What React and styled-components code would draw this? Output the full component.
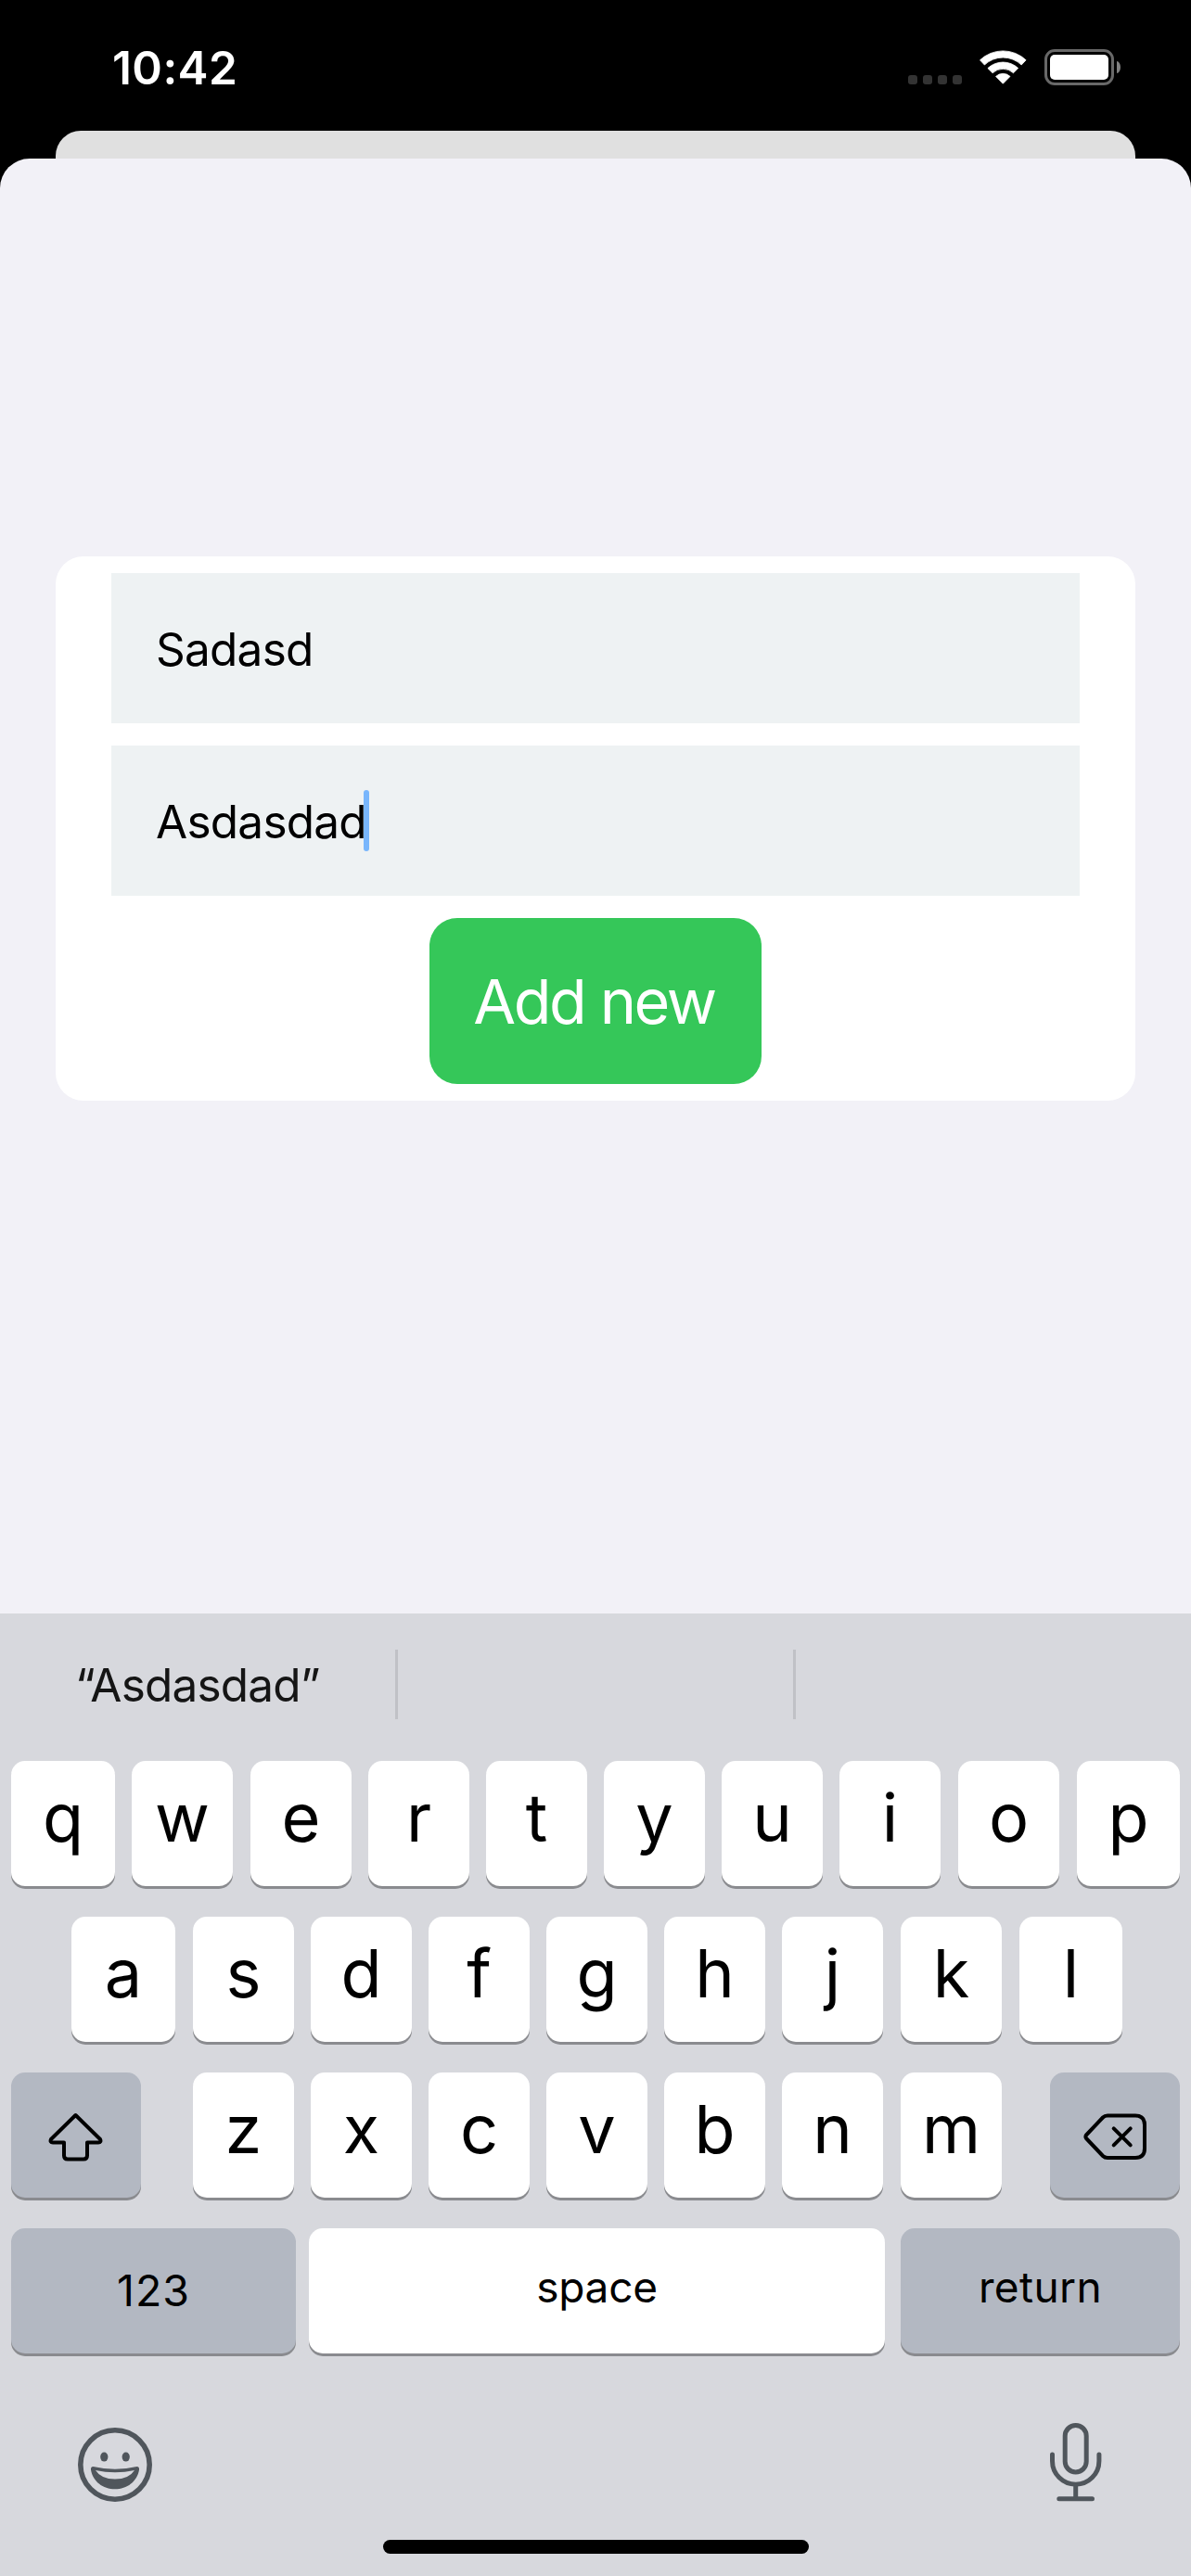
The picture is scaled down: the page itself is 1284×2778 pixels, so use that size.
import React from "react";
import styled, { createGlobalStyle } from "styled-components";

const GlobalStyle = createGlobalStyle`
  * { box-sizing: border-box; }
  body { margin: 0; background: #000; }
`;

const Screen = styled.div`
  display: flex;
  flex-direction: column;
  width: 1284px;
  height: 2778px;
  overflow: hidden;
  background: #000;
  color: #000;
  font-family: Inter, "Liberation Sans", sans-serif;
`;

const StatusBar = styled.header`
  display: flex;
  justify-content: space-between;
  align-items: flex-start;
  flex: none;
  height: 141px;
  padding: 53px 76px 0 121px;
  color: #fff;
`;

const Clock = styled.time`
  font-size: 49.5px;
  font-weight: 600;
  line-height: 40px;
  letter-spacing: 0.4px;
`;

const Indicators = styled.div`
  display: flex;
  align-items: flex-end;
  gap: 19px;
  height: 39px;
`;

const SignalDots = styled.div`
  display: flex;
  gap: 6px;
  padding-bottom: 1px;
`;

const SignalDot = styled.span`
  width: 10px;
  height: 10px;
  border-radius: 3px;
  background: #333;
`;

const WifiIcon = styled.svg`
  display: block;
  width: 51px;
  height: 37px;
  margin-bottom: 1px;
`;

const Battery = styled.div`
  display: flex;
  align-items: center;
  gap: 3px;
`;

const BatteryShell = styled.div`
  width: 75px;
  height: 39px;
  padding: 3px;
  border: 3px solid #686868;
  border-radius: 11px;
`;

const BatteryLevel = styled.div`
  height: 100%;
  border-radius: 5px;
  background: #fff;
`;

const BatteryTip = styled.span`
  width: 4px;
  height: 13px;
  border-radius: 0 4px 4px 0 / 0 6.5px 6.5px 0;
  background: #808080;
`;

const BackSheet = styled.div`
  flex: none;
  height: 30px;
  margin: 0 60px;
  border-radius: 27px 27px 0 0;
  background: #e0e0e0;
`;

const Sheet = styled.main`
  flex: 1;
  padding: 429px 60px 0;
  border-radius: 32px 32px 0 0;
  background: #f2f1f7;
`;

const FormCard = styled.section`
  display: flex;
  flex-direction: column;
  align-items: center;
  gap: 24px;
  padding: 18px 60px;
  border-radius: 30px;
  background: #fff;
`;

const Field = styled.div`
  display: flex;
  align-items: center;
  width: 100%;
  height: 162px;
  padding: 0 48px;
  background: #eef2f3;
  font-size: 49.5px;
  letter-spacing: -0.75px;
  line-height: 60px;
`;

const FieldText = styled.span`
  padding-top: 2px;
`;

const Caret = styled.span`
  width: 6px;
  height: 66px;
  margin-left: -3px;
  border-radius: 3px;
  background: #78b6fc;
`;

const AddButton = styled.button`
  width: 358px;
  height: 179px;
  padding: 0 3px 0 0;
  border: 0;
  border-radius: 30px;
  background: #35c759;
  color: #fff;
  font: 400 66.5px/80px Inter, "Liberation Sans", sans-serif;
  letter-spacing: -2.4px;
`;

const Keyboard = styled.section`
  display: flex;
  flex-direction: column;
  flex: none;
  height: 1038px;
  background: #d7d8dd;
`;

const Suggestions = styled.div`
  display: flex;
  align-items: center;
  height: 153px;
`;

const Suggestion = styled.div`
  flex: 1;
  color: #151515;
  font-size: 49.5px;
  line-height: 60px;
  letter-spacing: -0.8px;
  text-align: center;
`;

const Divider = styled.span`
  width: 3px;
  height: 75px;
  background: #c0c1c6;
`;

const KeyRows = styled.div`
  display: flex;
  flex-direction: column;
  gap: 33px;
  padding: 6px 12px 0;
`;

const KeyRow = styled.div`
  display: flex;
`;

const Key = styled.button`
  display: flex;
  align-items: center;
  justify-content: center;
  flex: none;
  width: ${(p) => p.$width || 109}px;
  height: 135px;
  margin-left: ${(p) => p.$before ?? 18}px;
  padding: 0 0 ${(p) => p.$lift || 0}px;
  border: 0;
  border-radius: 15px;
  background: ${(p) => (p.$dark ? "#b3b8c2" : "#fff")};
  box-shadow: 0 3px 0 #8a8b8f;
  color: #000;
  font: 400 ${(p) => p.$size || 72}px/88px Inter, "Liberation Sans", sans-serif;
  letter-spacing: ${(p) => p.$spacing || 0}px;
`;

const KeyIcon = styled.svg`
  display: block;
  fill: none;
  stroke: #000;
  stroke-width: 4;
  stroke-linecap: round;
  stroke-linejoin: round;
`;

const KeyboardFooter = styled.div`
  display: flex;
  justify-content: space-between;
  align-items: flex-start;
  height: 201px;
  padding: 75px 96px 0 84px;
  color: #50565c;
`;

const EmojiIcon = styled.svg`
  display: block;
  width: 80px;
  height: 80px;
  margin-top: 5px;
`;

const MicIcon = styled.svg`
  display: block;
  width: 56px;
  height: 85px;
  fill: none;
  stroke: currentColor;
  stroke-width: 5;
  stroke-linecap: round;
`;

const HomeIndicator = styled.div`
  align-self: center;
  width: 459px;
  height: 15px;
  border-radius: 7.5px;
  background: #000;
`;

// Keys rest on whole pixels, so some gaps and outer keys are a pixel or two wider.
const topRow = [
  { letter: "q", width: 112, before: 0 },
  { letter: "w" },
  { letter: "e", before: 19 },
  { letter: "r" },
  { letter: "t" },
  { letter: "y" },
  { letter: "u" },
  { letter: "i" },
  { letter: "o", before: 19 },
  { letter: "p", width: 111, before: 19 },
];

const homeRow = [
  { letter: "a", width: 112, before: 65 },
  { letter: "s", before: 19 },
  { letter: "d" },
  { letter: "f" },
  { letter: "g" },
  { letter: "h" },
  { letter: "j" },
  { letter: "k", before: 19 },
  { letter: "l", width: 111, before: 19 },
];

const bottomRow = [
  { letter: "z", before: 56 },
  { letter: "x" },
  { letter: "c" },
  { letter: "v" },
  { letter: "b" },
  { letter: "n" },
  { letter: "m", before: 19 },
];

const Letters = ({ keys }) =>
  keys.map(({ letter, width, before }) => (
    <Key key={letter} $lift={13} $width={width} $before={before}>
      {letter}
    </Key>
  ));

export default function App() {
  return (
    <Screen>
      <GlobalStyle />
      <StatusBar>
        <Clock>10:42</Clock>
        <Indicators>
          <SignalDots>
            <SignalDot />
            <SignalDot />
            <SignalDot />
            <SignalDot />
          </SignalDots>
          <WifiIcon viewBox="0 0 51 37" fill="#fff" stroke="#fff" strokeWidth="0.8" strokeLinejoin="round">
            <path d="M0.5 10.8A36 36 0 0 1 50.1 10.8L45.2 16A28.9 28.9 0 0 0 5.4 16Z" />
            <path d="M8.9 19.6A23.8 23.8 0 0 1 41.7 19.6L36.5 24.7A16.6 16.6 0 0 0 14.1 24.7Z" />
            <path d="M17.6 28.4A11.3 11.3 0 0 1 33 28.4L25.3 36.2Z" />
          </WifiIcon>
          <Battery>
            <BatteryShell>
              <BatteryLevel />
            </BatteryShell>
            <BatteryTip />
          </Battery>
        </Indicators>
      </StatusBar>

      <BackSheet />
      <Sheet>
        <FormCard>
          <Field>
            <FieldText>Sadasd</FieldText>
          </Field>
          <Field>
            <FieldText>Asdasdad</FieldText>
            <Caret />
          </Field>
          <AddButton>Add new</AddButton>
        </FormCard>
      </Sheet>

      <Keyboard>
        <Suggestions>
          <Suggestion>“Asdasdad”</Suggestion>
          <Divider />
          <Suggestion />
          <Divider />
          <Suggestion />
        </Suggestions>

        <KeyRows>
          <KeyRow>
            <Letters keys={topRow} />
          </KeyRow>
          <KeyRow>
            <Letters keys={homeRow} />
          </KeyRow>
          <KeyRow>
            <Key $dark $width={140} $before={0}>
              <KeyIcon width="60" height="60" viewBox="0 0 60 60">
                <path d="M29.5 8L3 34Q1.5 37.5 5 37.5H17V51.5Q17 55.5 21 55.5H38Q42 55.5 42 51.5V37.5H54Q57.5 37.5 56 34Z" />
              </KeyIcon>
            </Key>
            <Letters keys={bottomRow} />
            <Key $dark $width={140} $before={52}>
              <KeyIcon width="72" height="60" viewBox="0 0 72 60">
                <path d="M28 8.5H58Q68 8.5 68 18.5V44Q68 54 58 54H28Q25 54 23 52L5 33Q3.8 31.2 5 29.5L23 10.5Q25 8.5 28 8.5Z" />
                <path d="M34.7 22.4L52.7 40.4M52.7 22.4L34.7 40.4" />
              </KeyIcon>
            </Key>
          </KeyRow>
          <KeyRow>
            <Key $dark $width={307} $before={0} $size={46.5} $spacing={1} $lift={2}>
              123
            </Key>
            <Key $width={621} $before={14} $size={46} $spacing={-0.3} $lift={10}>
              space
            </Key>
            <Key $dark $width={301} $before={17} $size={46} $spacing={0.4} $lift={10}>
              return
            </Key>
          </KeyRow>
        </KeyRows>

        <KeyboardFooter>
          <EmojiIcon viewBox="0 0 80 80">
            <circle cx="40" cy="40" r="37.2" fill="none" stroke="currentColor" strokeWidth="5.6" />
            <ellipse cx="28.3" cy="31.6" rx="4.1" ry="5" fill="currentColor" />
            <ellipse cx="51.7" cy="31.6" rx="4.1" ry="5" fill="currentColor" />
            <path
              fill="currentColor"
              fillRule="evenodd"
              d="M16.5 42Q40 47.5 63.5 42Q66.5 42 66 45.5C64 58 53 66.3 40 66.3C27 66.3 16 58 14 45.5Q13.5 42 16.5 42ZM19 46Q25 55.5 40 55.5Q55 55.5 61 46Q40 50.5 19 46Z"
            />
          </EmojiIcon>
          <MicIcon viewBox="0 0 56 85">
            <rect x="16.2" y="2.5" width="23" height="50.5" rx="11.5" />
            <path d="M2.5 34V41A25.2 25.2 0 0 0 52.9 41V34M27.7 66.5V81M9.8 81.8H45.5" />
          </MicIcon>
        </KeyboardFooter>
        <HomeIndicator />
      </Keyboard>
    </Screen>
  );
}
